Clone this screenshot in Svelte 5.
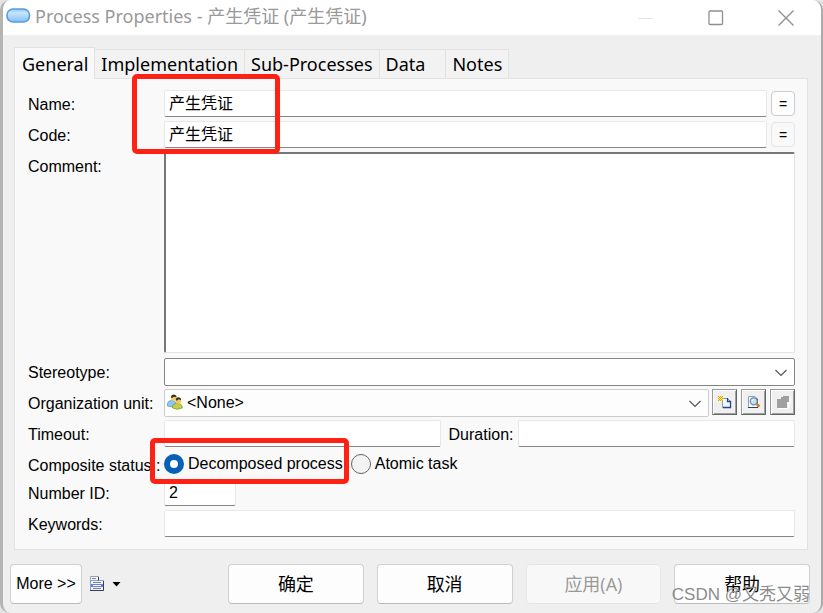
<script>
  let name = $state('产生凭证');
  let code = $state('产生凭证');
  let comment = $state('');
  let timeout = $state('');
  let duration = $state('');
  let numberId = $state('2');
  let keywords = $state('');
  let status = $state('decomposed');
  let active = $state('General');
  const tabs = ['General', 'Implementation', 'Sub-Processes', 'Data', 'Notes'];
</script>

<div class="dialog">
  <header>
    <svg class="logo" width="25" height="16" viewBox="0 0 25 16" aria-hidden="true">
      <defs>
        <linearGradient id="pill" x1="0" y1="0" x2="0" y2="1">
          <stop offset="0" stop-color="#8fc9f5" />
          <stop offset="0.3" stop-color="#c6e5fc" />
          <stop offset="1" stop-color="#7fc0f5" />
        </linearGradient>
      </defs>
      <rect x="1" y="1" width="22.5" height="13" rx="6" fill="url(#pill)" stroke="#5c9bd3" stroke-width="1.6" />
    </svg>
    <h1>Process Properties - 产生凭证 (产生凭证)</h1>
    <div class="controls">
      <button aria-label="Minimize"><svg width="16" height="16"><path d="M0 8.5H15" stroke="#e4e4e4" /></svg></button>
      <button aria-label="Maximize"><svg width="16" height="16"><rect x="1" y="1" width="13.5" height="13.5" rx="1" fill="none" stroke="#8f8f8f" stroke-width="1.3" /></svg></button>
      <button aria-label="Close"><svg width="16" height="16"><path d="M.5 .5L15.5 15.5M15.5 .5L.5 15.5" stroke="#8f8f8f" stroke-width="1.3" /></svg></button>
    </div>
  </header>

  <main>
    <div class="tabs" role="tablist">
      {#each tabs as tab}
        <button role="tab" class="tab" class:active={active === tab} class:roomy={tab === 'Data'} aria-selected={active === tab} onclick={() => (active = tab)}>{tab}</button>
      {/each}
    </div>

    <form class="panel">
      <div class="row">
        <label for="name">Name:</label>
        <input id="name" class="cjk" bind:value={name} />
        <button type="button" class="eq">=</button>
      </div>
      <div class="row">
        <label for="code">Code:</label>
        <input id="code" class="cjk" bind:value={code} />
        <button type="button" class="eq faint">=</button>
      </div>
      <div class="row tall">
        <label for="comment">Comment:</label>
        <textarea id="comment" bind:value={comment}></textarea>
      </div>
      <div class="row">
        <label for="stereo">Stereotype:</label>
        <div class="combo strong">
          <select id="stereo"><option></option></select>
          <svg class="chev" width="14" height="8"><path d="M1.5 1L7 6.5L12.5 1" fill="none" stroke="#555" stroke-width="1.2" /></svg>
        </div>
      </div>
      <div class="row">
        <label for="org">Organization unit:</label>
        <div class="combo">
          <svg class="people" width="16" height="16" viewBox="0 0 16 16">
            <path d="M.5 12V9.500Q1 7 4 6.500Q8 6 9 9V12Q5 13.500 .5 12Z" fill="#8cc8f8" stroke="#4d93d6" stroke-width=".7" />
            <circle cx="6.500" cy="4.500" r="2.500" fill="#f8cc5c" />
            <path d="M4 3.500Q4 .5 7 .5Q10 1 9.500 3.500L7 2.800L5 4Z" fill="#33302a" />
            <path d="M5.500 14V12Q6 10 9 9.500Q14 9 15.200 12V14Q10 16.500 5.500 14Z" fill="#bfd04c" stroke="#7d9426" stroke-width=".7" />
            <circle cx="11.300" cy="7.500" r="2.500" fill="#f6c452" />
            <path d="M8.800 6.500Q8.500 3.200 11.500 3.200Q14.500 3.500 14 6.500L12 5.300L10 6.500Z" fill="#3b3426" />
          </svg>
          <select id="org" class="with-icon"><option>&lt;None&gt;</option></select>
          <svg class="chev" width="14" height="8"><path d="M1.5 1L7 6.5L12.5 1" fill="none" stroke="#555" stroke-width="1.2" /></svg>
        </div>
        <div class="tools">
          <button type="button" aria-label="Create">
            <svg width="16" height="16" viewBox="0 0 16 16"><path d="M5.500 4.500H10.500L13.500 7.500V13.500H5.500Z" fill="#f3f8ff" stroke="#7f9bc6" /><path d="M10.500 4V7.500H13.500V13.500H6" fill="none" stroke="#27477c" stroke-width="1.300" /><path d="M1 2h5v5H1z" fill="#ffe36a" /><path d="M1 2h1v1h-1zM3 2h1v1h-1zM5 2h1v1h-1zM2 3h1v1h-1zM4 3h1v1h-1zM1 4h1v1h-1zM3 4h1v1h-1zM5 4h1v1h-1zM2 5h1v1h-1zM4 5h1v1h-1zM1 6h1v1h-1zM3 6h1v1h-1zM5 6h1v1h-1z" fill="#e0a800" /></svg>
          </button>
          <button type="button" aria-label="Properties">
            <svg width="16" height="16" viewBox="0 0 16 16"><path d="M2.500 2.500H9L11.500 5V13.500H2.500Z" fill="#fff" stroke="#7fa3d0" /><path d="M2 13.500H12M11.500 5V9" stroke="#29436e" /><circle cx="7.700" cy="7.300" r="3.500" fill="#bfe2f6" stroke="#77828f" stroke-width="1.200" /><path d="M6 7Q6.300 5.500 8 5.500" fill="none" stroke="#fff" /><path d="M10.500 10L13.500 12.500" stroke="#d07f2a" stroke-width="2.600" /></svg>
          </button>
          <button type="button" aria-label="Select" disabled>
            <svg width="16" height="16" viewBox="0 0 16 16"><path d="M3 14.500H13.500V9.500H15V3" fill="none" stroke="#fff" /><path d="M2 5H6V3H8V2H14V8H12V14H2Z" fill="#a0a0a0" /></svg>
          </button>
        </div>
      </div>
      <div class="row">
        <label for="timeout">Timeout:</label>
        <input id="timeout" bind:value={timeout} />
        <label for="duration" class="mid">Duration:</label>
        <input id="duration" bind:value={duration} />
      </div>
      <div class="row short" role="radiogroup" aria-labelledby="status-label">
        <span id="status-label" class="label">Composite status :</span>
        <label class="choice"><input type="radio" name="status" value="decomposed" bind:group={status} />Decomposed process</label>
        <label class="choice"><input type="radio" name="status" value="atomic" bind:group={status} />Atomic task</label>
      </div>
      <div class="row">
        <label for="number">Number ID:</label>
        <input id="number" class="small" bind:value={numberId} />
      </div>
      <div class="row">
        <label for="keywords">Keywords:</label>
        <input id="keywords" bind:value={keywords} />
      </div>
    </form>
  </main>

  <footer>
    <button class="more">More &gt;&gt;</button>
    <button class="menu" aria-label="Menu">
      <svg width="32" height="16" viewBox="0 0 32 16"><path d="M.5 5V.5H8.500V5" fill="#f2f4f8" stroke="#8ba2c0" /><path d="M2 2.500h4" stroke="#8a8a8a" /><path d="M.5 4.500H13.500V14.500H.5Z" fill="#f2f4f8" stroke="#8ba2c0" /><path d="M13.500 5V14.500H0M8.500 1V4.500" fill="none" stroke="#2e405c" /><path d="M3 6.500h8M3 12.500h8" stroke="#808080" /><path d="M1 8h12v3H1z" fill="#5f7ff2" /><path d="M3 9.500h8" stroke="#fff" /><path d="M22.500 6h8l-4 4.500z" fill="#000" /></svg>
    </button>
    <div class="actions">
      <button>确定</button>
      <button>取消</button>
      <button disabled>应用(A)</button>
      <button>帮助</button>
    </div>
  </footer>

  <div class="mark first"></div>
  <div class="mark second"></div>
  <div class="watermark">CSDN @又秃又弱</div>
</div>

<style>
  :global(body) { background: #e4e4e4; }
  .dialog {
    position: relative; box-sizing: border-box; min-height: 613px; overflow: hidden;
    border-left: 3px solid #b4b4b4; border-right: 2px solid #aaa; border-radius: 10px;
    background: #efefef; color: #000;
    font: 16px/20px "Liberation Sans", "Noto Sans CJK SC", sans-serif;
  }
  button, input, select, textarea { box-sizing: border-box; margin: 0; padding: 0; font: inherit; color: inherit; border: 0; background: none; border-radius: 0; outline: 0; }
  header { display: flex; align-items: center; height: 35px; background: #fff; padding: 0 27px 0 3px; }
  .logo { margin-right: 4px; margin-bottom: 4px; }
  h1 { flex: 1; margin: 0; padding-bottom: 3px; font: 18px/24px "Noto Sans", "Noto Sans CJK SC", sans-serif; color: #999; white-space: nowrap; }
  .controls { display: flex; gap: 54px; }
  .controls button { width: 16px; height: 16px; display: flex; }
  main { padding: 12px 13px 0 11px; }
  .tabs { display: flex; align-items: flex-end; height: 31px; }
  .tab {
    height: 30px; padding: 0 6px; margin-bottom: -1px; border: 1px solid #e2e2e2; border-left-width: 0; background: #f2f2f2;
    font: 18px/28px "Noto Sans", sans-serif; white-space: nowrap;
  }
  .tab.active { position: relative; height: 32px; padding: 0 6px 0 7px; border-left-width: 1px; border-bottom: 0; background: #f9f9f9; }
  .tab.roomy { padding-right: 20px; }
  .panel { display: flex; flex-direction: column; gap: 3px; border: 1px solid #e2e2e2; background: #f9f9f9; padding: 11px 12px 11px 13px; }
  .row { display: flex; height: 28px; align-items: flex-start; }
  .row.tall { height: 203px; }
  .row.short { height: 25px; }
  .row > label:first-child, .label { flex: none; width: 136px; line-height: 30px; white-space: nowrap; }
  .row > input, textarea { flex: 1; min-width: 0; height: 27px; padding: 0 4px; background: #fff; border: 1px solid #e8e8e8; border-bottom-color: #858585; border-radius: 2px; }
  .row > input.cjk { font-family: "Noto Sans CJK SC", sans-serif; padding-bottom: 3px; }
  .row > input.small { flex: none; width: 72px; }
  .row > textarea { height: 201px; resize: none; border-color: #777 #e4e4e4 #e4e4e4 #777; border-width: 2px 1px 1px 2px; }
  .eq { width: 24px; height: 25px; margin: 1px 0 0 4px; border: 1px solid #ccc; border-radius: 4px; background: #fdfdfd; font-size: 14px; }
  .eq.faint { border-color: #e6e6e6; background: #f9f9f9; }
  .combo { position: relative; flex: 1; height: 28px; border: 1px solid #ccc; border-radius: 2px; background: #fdfdfd; box-sizing: border-box; }
  .combo.strong { border-color: #858585; background: #fff; }
  .combo select { appearance: none; width: 100%; height: 26px; display: block; }
  .combo select.with-icon { padding-left: 22px; }
  .chev { position: absolute; right: 6px; top: 10px; pointer-events: none; }
  .people { position: absolute; left: 2px; top: 4px; }
  .tools { display: flex; gap: 4px; margin-left: 3px; }
  .tools button { width: 25px; height: 26px; display: flex; align-items: center; justify-content: center; background: #f0f0f0; border: 1px solid; border-color: #999 #666 #666 #999; box-shadow: inset 1px 1px #fff, inset -1px -1px #a0a0a0; }
  .tools svg { flex: none; }
  .mid { padding: 0 5px 0 8px; line-height: 30px; }
  .choice { display: flex; align-items: center; height: 25px; white-space: nowrap; margin-right: 8px; }
  .choice input { appearance: none; width: 20px; height: 20px; border: 1px solid #666; border-radius: 50%; background: #f3f3f3; margin-right: 4px; }
  .choice input:checked { border: 6px solid #0560b6; background: #fff; }
  footer { display: flex; align-items: center; padding: 14px 11px 9px 7px; }
  footer button { height: 40px; white-space: nowrap; }
  .more, .actions button { border: 1px solid #d0d0d0; border-bottom-color: #bbb; border-radius: 4px; background: #fdfdfd; }
  .more { width: 72px; }
  .menu { margin-left: 8px; display: flex; align-items: center; }
  .actions { flex: 1; display: flex; gap: 13px; margin-left: 106px; }
  .actions button { flex: 1; font: 18px/24px "Open Sans", "Noto Sans CJK SC", sans-serif; }
  .actions button:disabled { color: #999; background: #f8f8f8; border-color: #e6e6e6; }
  .mark { position: absolute; box-sizing: border-box; border: 5px solid #ff2113; border-radius: 5px; pointer-events: none; }
  .first { left: 129px; top: 74px; width: 148px; height: 80px; }
  .second { left: 147px; top: 438px; width: 199px; height: 46px; }
  .watermark { position: absolute; right: 11px; bottom: 5px; font: 17px/26px "Liberation Sans", "Noto Sans CJK SC", sans-serif; color: #8c8c8c; white-space: nowrap; pointer-events: none; }
</style>
